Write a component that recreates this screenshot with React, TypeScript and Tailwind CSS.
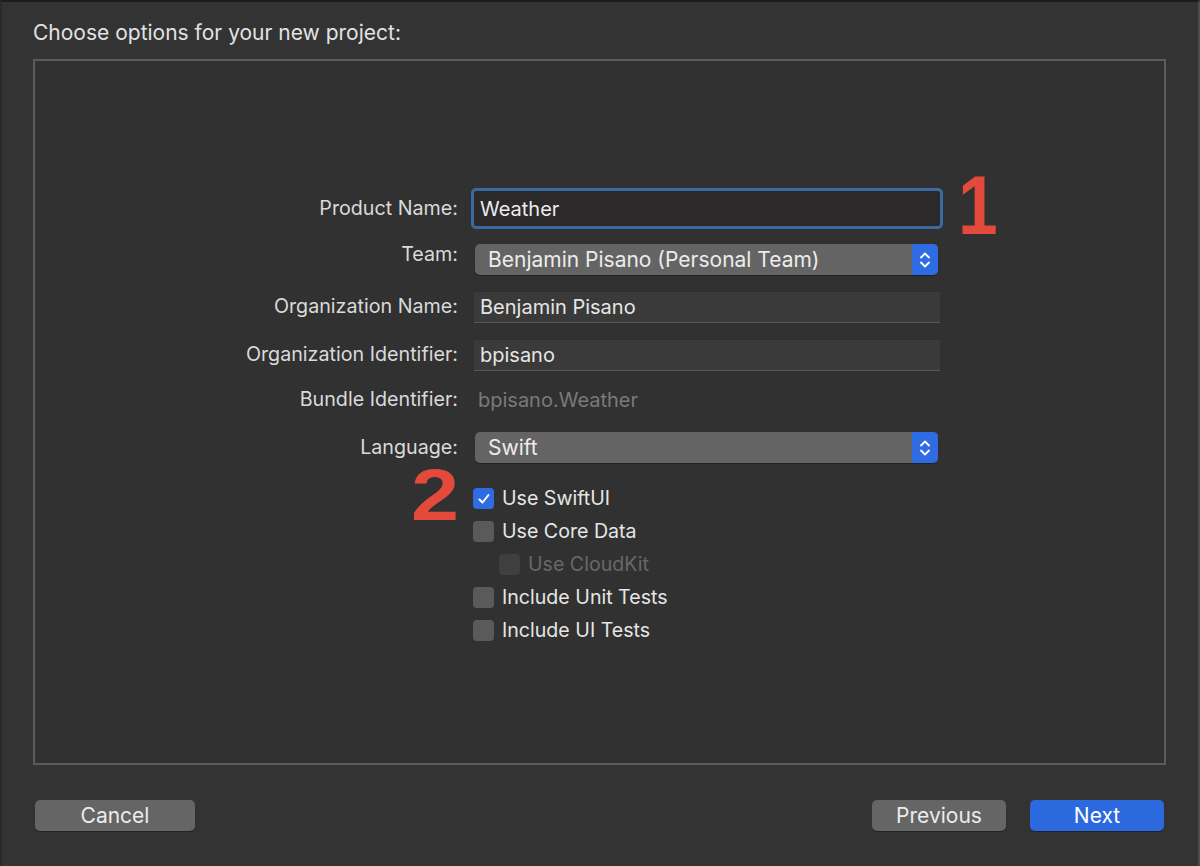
import React from "react";

const font = { fontFamily: "Inter, 'Noto Sans', sans-serif" };

function Chevrons() {
  return (
    <svg width="12" height="18" viewBox="0 0 12 18" fill="none" stroke="white" strokeWidth="1.8" strokeLinecap="round" strokeLinejoin="round">
      <path d="M2 6.5 L6 2.5 L10 6.5" />
      <path d="M2 11.5 L6 15.5 L10 11.5" />
    </svg>
  );
}

function Popup({ value }: { value: string }) {
  return (
    <div className="ml-[1px] w-[463px] h-[31px] rounded-[5px] bg-[#646464] flex items-stretch shadow-[0_1px_1px_rgba(0,0,0,0.35)] overflow-hidden">
      <div className="flex-1 flex items-center pl-[13px] text-[21px] text-[#ececec]">{value}</div>
      <div className="w-[26px] bg-[#2f6be2] flex items-center justify-center">
        <Chevrons />
      </div>
    </div>
  );
}

function TextField({ value }: { value: string }) {
  return (
    <div className="w-[466px] h-[32px] bg-[#3a3a3a] border-b border-b-[#575757] border-t border-t-[#2e2e2e] flex items-center pl-[6px] text-[20px] text-[#e6e6e6]">
      {value}
    </div>
  );
}

function Row({ label, children, h, mt, labelShift = "" }: { label: string; children?: React.ReactNode; h: string; mt: string; labelShift?: string }) {
  return (
    <div className={`flex items-center ${h} ${mt}`}>
      <div className={`w-[423px] text-right text-[19.7px] text-[#dadada] ${labelShift}`}>{label}</div>
      <div className="ml-[16px]">{children}</div>
    </div>
  );
}

function Check({ label, checked = false, disabled = false, indent = false }: { label: string; checked?: boolean; disabled?: boolean; indent?: boolean }) {
  return (
    <div className={`flex items-center h-[33px] ${indent ? "pl-[26px]" : ""}`}>
      <div
        className={`w-[21px] h-[21px] rounded-[4px] flex items-center justify-center ${
          checked ? "bg-[#2f6be2]" : disabled ? "bg-[#3f3f3f]" : "bg-[#5a5a5a]"
        }`}
      >
        {checked && (
          <svg width="14" height="14" viewBox="0 0 14 14" fill="none" stroke="white" strokeWidth="2" strokeLinecap="round" strokeLinejoin="round">
            <path d="M2.5 7.5 L5.5 10.5 L11.5 3" />
          </svg>
        )}
      </div>
      <span className={`ml-[8px] text-[19.6px] ${disabled ? "text-[#686868]" : "text-[#e6e6e6]"}`}>{label}</span>
    </div>
  );
}

export default function App() {
  return (
    <div style={font} className="w-[1200px] h-[866px] bg-[#333333] border-t-2 border-t-[#1c1c1c] border-r-2 border-r-[#4c4c4c] border-l-2 border-l-[#2a2a2a] flex flex-col pl-[31px] pr-[32px]">
      <h1 className="pt-[19px] leading-[24px] text-[21px] text-[#e2e2e2]">Choose options for your new project:</h1>

      <div className="relative mt-[14px] h-[706px] border-2 border-[#5c5c5c] bg-[#313131] pt-[127px]">
        {/* product name */}
        <Row label="Product Name:" h="h-[41px]" mt="mt-0">
          <div className="ml-[-3px] w-[472px] h-[41px] rounded-[5px] border-[3px] border-[#3b6a9e] bg-[#2b2929] flex items-center pl-[6px] text-[20px] text-[#ececec]">
            Weather
          </div>
        </Row>
        <Row label="Team:" h="h-[31px]" mt="mt-[15px]" labelShift="-translate-y-[5px]">
          <Popup value="Benjamin Pisano (Personal Team)" />
        </Row>
        <Row label="Organization Name:" h="h-[32px]" mt="mt-[16px]">
          <TextField value="Benjamin Pisano" />
        </Row>
        <Row label="Organization Identifier:" h="h-[32px]" mt="mt-[16px]">
          <TextField value="bpisano" />
        </Row>
        <Row label="Bundle Identifier:" h="h-[30px]" mt="mt-[14px]">
          <span className="ml-[4px] text-[20px] text-[#7a7a7a]">bpisano.Weather</span>
        </Row>
        <Row label="Language:" h="h-[31px]" mt="mt-[17px]">
          <Popup value="Swift" />
        </Row>

        <div className="mt-[19px] pl-[438px] flex flex-col">
          <Check label="Use SwiftUI" checked />
          <Check label="Use Core Data" />
          <Check label="Use CloudKit" disabled indent />
          <Check label="Include Unit Tests" />
          <Check label="Include UI Tests" />
        </div>

        {/* annotations */}
        <div className="absolute left-[923px] top-[102px] text-[84px] font-bold leading-none text-[#e34a3b] scale-x-[0.85] origin-left" style={{ fontFamily: "'Liberation Sans', Arial, sans-serif" }}>
          1
        </div>
        <div className="absolute left-[376px] top-[398px] text-[72px] font-bold leading-none text-[#e34a3b] scale-x-[1.2] origin-left" style={{ fontFamily: "'Liberation Sans', Arial, sans-serif" }}>
          2
        </div>
      </div>

      <div className="mt-[35px] flex items-center px-[2px]">
        <button className="w-[160px] h-[31px] rounded-[5px] bg-[#656565] text-[21px] text-[#ececec] shadow-[0_1px_1px_rgba(0,0,0,0.35)]">Cancel</button>
        <div className="flex-1" />
        <button className="w-[134px] h-[31px] rounded-[5px] bg-[#656565] text-[21px] text-[#ececec] shadow-[0_1px_1px_rgba(0,0,0,0.35)]">Previous</button>
        <button className="ml-[24px] w-[134px] h-[31px] rounded-[5px] bg-[#2d69de] text-[21px] text-white shadow-[0_1px_1px_rgba(0,0,0,0.35)]">Next</button>
      </div>
    </div>
  );
}
